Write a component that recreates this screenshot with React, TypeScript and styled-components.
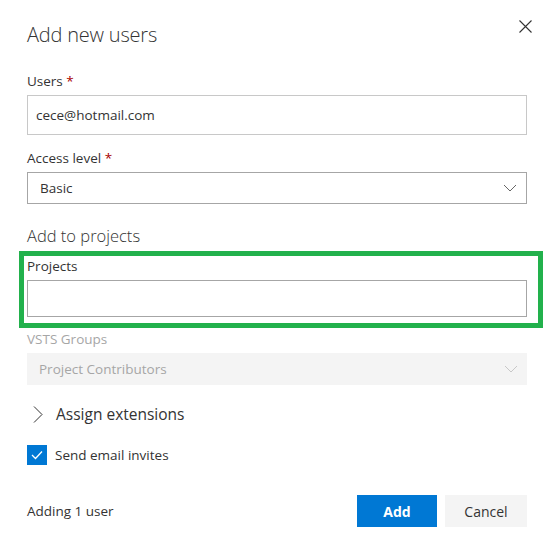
import styled, { createGlobalStyle } from 'styled-components'

const GlobalStyle = createGlobalStyle`
  html, body {
    margin: 0;
    padding: 0;
    background: #ffffff;
  }
  body {
    font-family: "Open Sans", "Noto Sans", sans-serif;
    color: #333333;
  }
`

const colors = {
  text: '#333333',
  border: '#a6a6a6',
  borderLight: '#c8c8c8',
  disabled: '#a6a6a6',
  disabledBg: '#f4f4f4',
  primary: '#0078d4',
  required: '#a80000',
  highlight: '#22b14c',
}

const ChevronDown = ({ color }: { color: string }) => (
  <svg width="14" height="8" viewBox="0 0 14 8">
    <path d="M1 1 L7 7 L13 1" fill="none" stroke={color} strokeWidth="1" />
  </svg>
)

const App = () => {
  return (
    <>
      <GlobalStyle />
      <Dialog>
        <Header>
          <Title>Add new users</Title>
          <CloseButton aria-label="Close">
            <svg width="13" height="13" viewBox="0 0 13 13">
              <path d="M0.5 0.5 L12.5 12.5 M12.5 0.5 L0.5 12.5" stroke="#333" strokeWidth="1.1" />
            </svg>
          </CloseButton>
        </Header>

        <Field mt="24px">
          <Label>
            Users <Required>*</Required>
          </Label>
          <TextBox h="40px" light>
            cece@hotmail.com
          </TextBox>
        </Field>

        <Field mt="14px">
          <Label>
            Access level <Required>*</Required>
          </Label>
          <Select>
            <span>Basic</span>
            <ChevronDown color="#666" />
          </Select>
        </Field>

        <SectionTitle>Add to projects</SectionTitle>

        <Highlight>
          <Label>Projects</Label>
          <TextBox h="37px" />
        </Highlight>

        <Field mt="2px">
          <Label disabled>VSTS Groups</Label>
          <Select disabled>
            <span>Project Contributors</span>
            <ChevronDown color="#c8c8c8" />
          </Select>
        </Field>

        <Expander>
          <svg width="10" height="17" viewBox="0 0 10 17">
            <path d="M1 0.5 L9 8.5 L1 16.5" fill="none" stroke="#333" strokeWidth="1" />
          </svg>
          <ExpanderText>Assign extensions</ExpanderText>
        </Expander>

        <CheckRow>
          <CheckBox>
            <svg width="12" height="10" viewBox="0 0 12 10">
              <path d="M1 5 L4.5 8.5 L11 1.5" fill="none" stroke="#fff" strokeWidth="1.3" />
            </svg>
          </CheckBox>
          <CheckLabel>Send email invites</CheckLabel>
        </CheckRow>

        <Footer>
          <FooterText>Adding 1 user</FooterText>
          <Buttons>
            <Button primary>Add</Button>
            <Button>Cancel</Button>
          </Buttons>
        </Footer>
      </Dialog>
    </>
  )
}

export default App

const Dialog = styled.div`
  display: flex;
  flex-direction: column;
  width: 500px;
  padding: 22px 28px 0 27px;
`
const Header = styled.div`
  display: flex;
  justify-content: space-between;
  align-items: flex-start;
  height: 26px;
`
const Title = styled.div`
  font-size: 20px;
  font-weight: 300;
  line-height: 26px;
  color: ${colors.text};
  letter-spacing: -0.2px;
`
const CloseButton = styled.div`
  display: flex;
  margin-top: -2px;
  margin-right: -5px;
`
const Field = styled.div<{ mt: string }>`
  display: flex;
  flex-direction: column;
  margin-top: ${(p) => p.mt};
`
const Label = styled.div<{ disabled?: boolean }>`
  font-size: 13.5px;
  line-height: 18px;
  height: 18px;
  margin-bottom: 5px;
  color: ${(p) => (p.disabled ? colors.disabled : colors.text)};
`
const Required = styled.span`
  color: ${colors.required};
`
const TextBox = styled.div<{ h: string; light?: boolean }>`
  display: flex;
  align-items: center;
  box-sizing: border-box;
  height: ${(p) => p.h};
  border: 1px solid ${(p) => (p.light ? colors.borderLight : colors.border)};
  padding: 0 8px;
  font-size: 13.5px;
  color: ${colors.text};
`
const Select = styled.div<{ disabled?: boolean }>`
  display: flex;
  align-items: center;
  justify-content: space-between;
  box-sizing: border-box;
  height: 32px;
  padding: 0 9px 0 12px;
  border: ${(p) => (p.disabled ? 'none' : `1px solid ${colors.border}`)};
  background: ${(p) => (p.disabled ? colors.disabledBg : '#fff')};
  font-size: 13.5px;
  color: ${(p) => (p.disabled ? colors.disabled : colors.text)};
`
const SectionTitle = styled.div`
  margin-top: 21px;
  font-size: 16.5px;
  font-weight: 300;
  line-height: 22px;
  color: ${colors.text};
`
const Highlight = styled.div`
  display: flex;
  flex-direction: column;
  margin: 4px -16px 0 -8px;
  padding: 1px 11px 6px 3px;
  border: 5px solid ${colors.highlight};
`
const Expander = styled.div`
  display: flex;
  align-items: center;
  gap: 13px;
  margin-top: 18px;
  padding-left: 6px;
  height: 22px;
`
const ExpanderText = styled.span`
  font-size: 15.5px;
  color: ${colors.text};
`
const CheckRow = styled.div`
  display: flex;
  align-items: center;
  gap: 8px;
  margin-top: 20px;
`
const CheckBox = styled.div`
  display: flex;
  align-items: center;
  justify-content: center;
  width: 20px;
  height: 20px;
  background: ${colors.primary};
`
const CheckLabel = styled.span`
  font-size: 13.5px;
  color: ${colors.text};
`
const Footer = styled.div`
  display: flex;
  justify-content: space-between;
  align-items: center;
  margin-top: 30px;
`
const FooterText = styled.span`
  font-size: 13.5px;
  color: ${colors.text};
`
const Buttons = styled.div`
  display: flex;
  gap: 8px;
`
const Button = styled.div<{ primary?: boolean }>`
  display: flex;
  align-items: center;
  justify-content: center;
  height: 32px;
  min-width: ${(p) => (p.primary ? '80px' : '82px')};
  background: ${(p) => (p.primary ? colors.primary : colors.disabledBg)};
  color: ${(p) => (p.primary ? '#fff' : colors.text)};
  font-size: 14px;
  font-weight: ${(p) => (p.primary ? 700 : 400)};
`
